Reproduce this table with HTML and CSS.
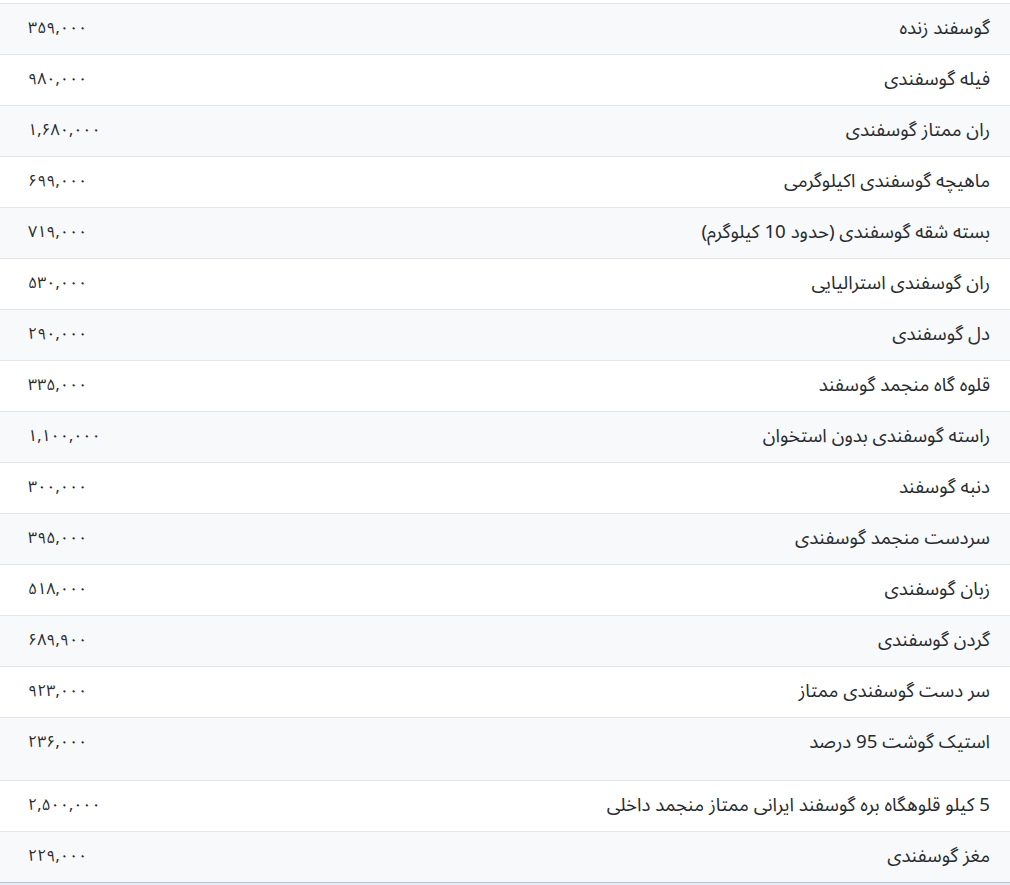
FILE: index.html
```html
<!DOCTYPE html>
<html lang="fa" dir="rtl">
<head>
<meta charset="utf-8">
<title>قیمت گوشت گوسفندی</title>
<link rel="stylesheet" href="styles.css">
</head>
<body>
<table class="prices">
<tbody>
<tr><td class="name">گوسفند زنده</td><td class="price">۳۵۹,۰۰۰</td></tr>
<tr><td class="name">فیله گوسفندی</td><td class="price">۹۸۰,۰۰۰</td></tr>
<tr><td class="name">ران ممتاز گوسفندی</td><td class="price">۱,۶۸۰,۰۰۰</td></tr>
<tr><td class="name">ماهیچه گوسفندی اکیلوگرمی</td><td class="price">۶۹۹,۰۰۰</td></tr>
<tr><td class="name">بسته شقه گوسفندی (حدود 10 کیلوگرم)</td><td class="price">۷۱۹,۰۰۰</td></tr>
<tr><td class="name">ران گوسفندی استرالیایی</td><td class="price">۵۳۰,۰۰۰</td></tr>
<tr><td class="name">دل گوسفندی</td><td class="price">۲۹۰,۰۰۰</td></tr>
<tr><td class="name">قلوه گاه منجمد گوسفند</td><td class="price">۳۳۵,۰۰۰</td></tr>
<tr><td class="name">راسته گوسفندی بدون استخوان</td><td class="price">۱,۱۰۰,۰۰۰</td></tr>
<tr><td class="name">دنبه گوسفند</td><td class="price">۳۰۰,۰۰۰</td></tr>
<tr><td class="name">سردست منجمد گوسفندی</td><td class="price">۳۹۵,۰۰۰</td></tr>
<tr><td class="name">زبان گوسفندی</td><td class="price">۵۱۸,۰۰۰</td></tr>
<tr><td class="name">گردن گوسفندی</td><td class="price">۶۸۹,۹۰۰</td></tr>
<tr><td class="name">سر دست گوسفندی ممتاز</td><td class="price">۹۲۳,۰۰۰</td></tr>
<tr class="tall"><td class="name">استیک گوشت 95 درصد</td><td class="price">۲۳۶,۰۰۰</td></tr>
<tr><td class="name">5 کیلو قلوهگاه بره گوسفند ایرانی ممتاز منجمد داخلی</td><td class="price">۲,۵۰۰,۰۰۰</td></tr>
<tr><td class="name">مغز گوسفندی</td><td class="price">۲۲۹,۰۰۰</td></tr>
</tbody>
</table>
<div class="footer"></div>
</body>
</html>
```
FILE: styles.css
```css
html, body {
  margin: 0;
  padding: 0;
  background: #ffffff;
}
body {
  font-family: "Noto Sans Arabic", "DejaVu Sans", sans-serif;
  color: #272b30;
  font-size: 18.7px;
  padding-top: 3px;
}
.prices {
  width: 100%;
  border-collapse: collapse;
  direction: rtl;
}
.prices td {
  border-top: 1px solid #e3e6ea;
  padding: 12px 20px 14px 20px;
  line-height: 24px;
  height: 24px;
  vertical-align: top;
  white-space: nowrap;
}
.prices tr:nth-child(odd) td {
  background: #f8f9fb;
}
.prices tr.tall td {
  padding-bottom: 26px;
}
.prices .name {
  text-align: right;
}
.prices .price {
  text-align: left;
  width: 1%;
  padding-left: 28px;
  padding-right: 20px;
  font-size: 16px;
}
.footer {
  border-top: 1px solid #b9c3cf;
  background: #e6eef8;
  height: 3px;
}
```
